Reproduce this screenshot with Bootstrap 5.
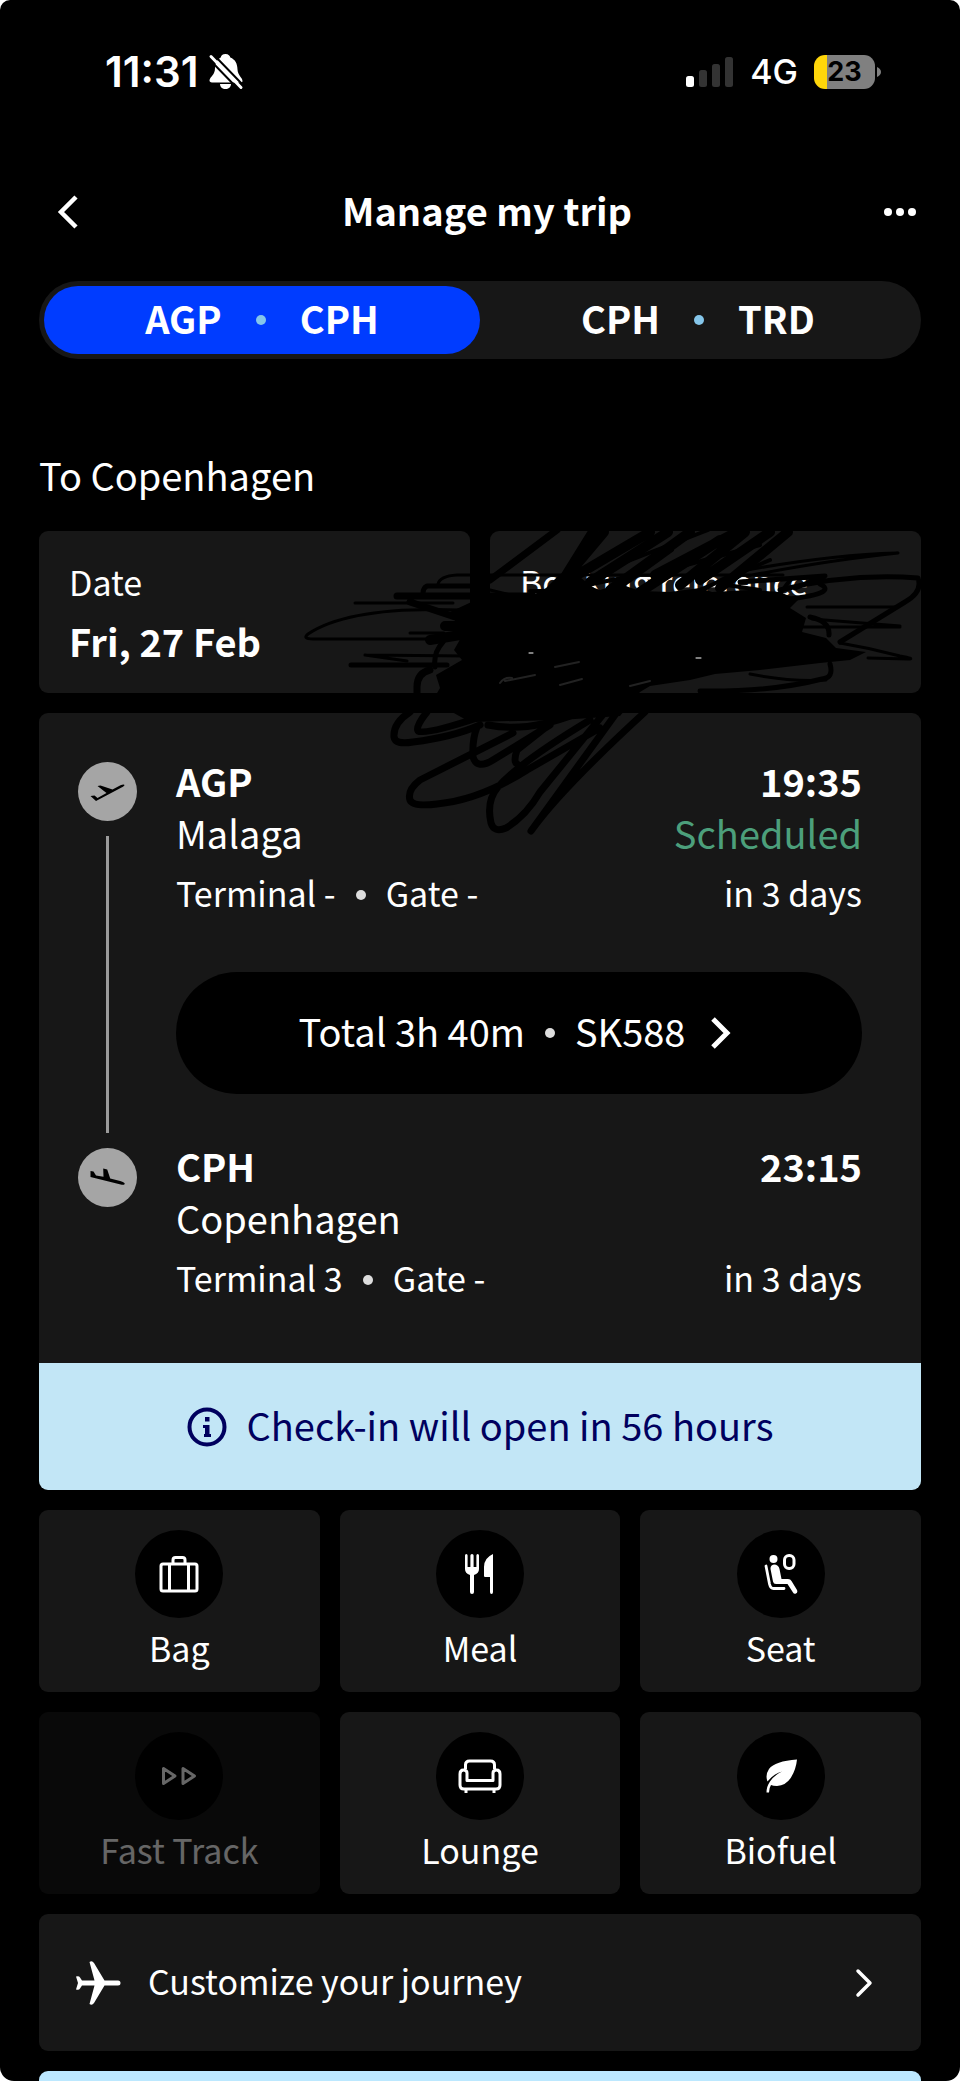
<!DOCTYPE html>
<html lang="en">
<head>
<meta charset="utf-8">
<meta name="viewport" content="width=device-width, initial-scale=1">
<title>Manage my trip</title>
<link href="https://cdn.jsdelivr.net/npm/bootstrap@5.3.0/dist/css/bootstrap.min.css" rel="stylesheet">
<style>
  :root { --panel: #171717; --ice: #c2e6f6; --navy: #00005e; }
  body { background: #fff; color: #fff; font-family: "Noto Sans CJK JP", "Noto Sans", sans-serif; font-size: 34px; line-height: 44px; }
  svg { display: block; flex: none; }
  .screen { background: #000; min-height: 100vh; border-radius: 10px 10px 14px 14px; padding: 0 39px; overflow: hidden; }
  .fs-l { font-size: 38px; line-height: 52px; }
  .lift { padding-bottom: 4px; }
  .status-row { font-family: Inter, sans-serif; height: 142px; padding: 2px 39px 0 66px; line-height: 40px; }
  .clock { font-size: 42px; font-weight: 600; }
  .ringer { gap: 10px; }
  .net { font-size: 34px; font-weight: 500; }
  .battery { width: 61px; height: 34px; border-radius: 11px; background: linear-gradient(90deg, #ffd60a 13px, #808080 13px); color: #000; font-size: 27px; line-height: 34px; font-weight: 700; }
  .title-row { height: 139px; padding: 0 4px 0 18px; }
  .title-row .btn { --bs-btn-padding-x: 0; --bs-btn-padding-y: 0; --bs-btn-color: #fff; --bs-btn-border-width: 0; width: 34px; height: 44px; display: flex; align-items: center; }
  .legs { background: var(--panel); border-radius: 40px; padding: 5px; --bs-nav-pills-border-radius: 34px; --bs-nav-pills-link-active-bg: #003cff; }
  .legs .nav-link { color: #fff; font-weight: 700; padding: 6px 0; border: 0; gap: 34px; }
  .dot { width: 10px; height: 10px; border-radius: 50%; background: #ddd; flex: none; }
  .legs .dot { background: #85c6ea; }
  .section-title { margin: 90px 0 30px; }
  .stack { gap: 20px; }
  .tile-row { --bs-gutter-x: 20px; --bs-gutter-y: 20px; }
  .panel { background: var(--panel); border-radius: 9px; }
  .fact { padding: 29px 30px 26px; }
  .fact dt { font-weight: 400; margin-bottom: 11px; }
  .fact dd { font-weight: 700; margin: 0; min-height: 52px; }
  .flight { padding: 42px 59px 63px 39px; gap: 39px; }
  .rail { width: 59px; padding: 7px 0 93px; gap: 15px; }
  .rail-line { width: 3px; background: #9b9b9b; }
  .scheduled { color: #4c9f7b; }
  .sub { margin-top: 12px; }
  .points { gap: 20px; }
  .points .dot { margin-top: 4px; }
  .total { background: #000; color: #fff; border: 0; border-radius: 61px; height: 122px; margin: 57px 0 46px; gap: 20px; }
  .checkin { background: var(--ice); color: var(--navy); height: 127px; gap: 20px; border-radius: 0 0 9px 9px; }
  .service { --bs-btn-color: #fff; --bs-btn-border-width: 0; --bs-btn-disabled-color: #fff; --bs-btn-disabled-bg: var(--panel); --bs-btn-disabled-opacity: .4; --bs-btn-hover-color: #fff; --bs-btn-hover-bg: var(--panel); font: inherit; padding: 20px 0 22px; gap: 8px; }
  .disc { width: 88px; height: 88px; border-radius: 50%; background: #000; }
  .journey { height: 137px; padding: 0 47px 0 36px; gap: 27px; color: #fff; }
  .offer { background: #bce8ff; border-radius: 9px 9px 0 0; min-height: 10px; }
  .scribble { top: 0; left: 0; width: 100%; pointer-events: none; }
</style>
</head>
<body>
<div class="screen d-flex flex-column">
  <div class="status-row d-flex align-items-center justify-content-between">
    <div class="ringer d-flex align-items-center">
      <span class="clock">11:31</span>
      <svg width="36" height="38" viewBox="0 0 36 38" aria-label="Silent mode"><path d="M17.500 1c3 0 4.500 2 4.800 3.500 5 2 7 6 7.200 12 .2 6 5 8 5 11.500 0 1-1 1.500-2 1.500H4c-1.500 0-3-.7-2.400-2.700C2.400 23.500 7 22 7 15c0-5 2-8.500 5.700-10.500C13 2.800 14.500 1 17.500 1zM12 31h11c0 3-2.500 5-5.500 5S12 34 12 31z" fill="#fff"/><path d="M1 6l30 31M5 1l30 31" stroke="#000" stroke-width="2"/><path d="M3 3.500l30 31" stroke="#fff" stroke-width="3" stroke-linecap="round"/></svg>
    </div>
    <div class="d-flex align-items-center">
      <svg class="me-3" width="48" height="32" viewBox="0 0 48 32" aria-label="Signal"><rect y="20" width="8" height="11" rx="2.500" fill="#fff"/><g fill="#333"><rect x="13" y="14" width="8" height="17" rx="2.500"/><rect x="26" y="8" width="8" height="23" rx="2.500"/><rect x="39" y="1" width="8" height="30" rx="2.500"/></g></svg>
      <span class="net me-3">4G</span>
      <span class="battery text-center">23</span>
      <svg width="7" height="12" viewBox="0 0 7 12"><path d="M2 1q4 2 4 5t-4 5z" fill="#808080"/></svg>
    </div>
  </div>

  <header class="title-row d-flex align-items-center justify-content-between">
    <button class="btn" type="button" aria-label="Back"><svg width="22" height="36" viewBox="0 0 22 36" fill="none" stroke="#fff" stroke-width="4.500"><path d="M19 3L4 18l15 15"/></svg></button>
    <h1 class="fs-l fw-bold m-0 lift">Manage my trip</h1>
    <button class="btn" type="button" aria-label="More"><svg width="34" height="10" viewBox="0 0 34 10" fill="#fff"><circle cx="5" cy="5" r="4"/><circle cx="17" cy="5" r="4"/><circle cx="29" cy="5" r="4"/></svg></button>
  </header>

  <nav class="legs nav nav-pills nav-justified flex-nowrap fs-l">
    <button class="nav-link active d-flex align-items-center justify-content-center" type="button"><span class="lift">AGP</span><span class="dot"></span><span class="lift">CPH</span></button>
    <button class="nav-link d-flex align-items-center justify-content-center" type="button"><span class="lift">CPH</span><span class="dot"></span><span class="lift">TRD</span></button>
  </nav>

  <h2 class="section-title fs-l fw-normal">To Copenhagen</h2>

  <main class="stack d-flex flex-column flex-grow-1">
    <div class="stack d-flex flex-column position-relative">
      <div class="row tile-row">
        <div class="col-6"><dl class="panel fact m-0"><dt>Date</dt><dd class="fs-l">Fri, 27 Feb</dd></dl></div>
        <div class="col-6"><dl class="panel fact m-0"><dt>Booking reference</dt><dd class="fs-l"></dd></dl></div>
      </div>

      <section class="panel">
        <div class="flight d-flex">
          <div class="rail d-flex flex-column align-items-center">
            <svg width="59" height="59" viewBox="0 0 59 59"><circle cx="29.500" cy="29.500" r="29.500" fill="#a5a5a5"/><path d="M12.500 34l4-.5 3 2.500 9-5-9-7 3-.5 12 4 8-4.200c2-.9 4-.9 4-.2s-1 1.500-2.500 2.200L18 39z" fill="#000"/></svg>
            <div class="rail-line flex-grow-1"></div>
            <svg width="59" height="59" viewBox="0 0 59 59"><circle cx="29.500" cy="29.500" r="29.500" fill="#a5a5a5"/><path d="M12.500 23l3 .5 2.500 4 7.500 1.300-.3-8.300 4 1 3 9 10 2.500c3 .8 5 2 4.500 3s-2 1-4 .6L12.500 29z" fill="#000"/></svg>
          </div>
          <div class="flex-grow-1">
            <div class="fs-l d-flex justify-content-between"><strong>AGP</strong><strong>19:35</strong></div>
            <div class="fs-l d-flex justify-content-between"><span>Malaga</span><span class="scheduled">Scheduled</span></div>
            <div class="sub d-flex justify-content-between"><span class="points d-flex align-items-center">Terminal - <span class="dot"></span>Gate -</span><span>in 3 days</span></div>
            <button type="button" class="total fs-l w-100 d-flex align-items-center justify-content-center"><span class="lift">Total 3h 40m</span><span class="dot"></span><span class="lift">SK588</span><svg width="34" height="36" viewBox="0 0 34 36" fill="none" stroke="#fff" stroke-width="5"><path d="M8 4l14 14L8 32"/></svg></button>
            <div class="fs-l d-flex justify-content-between"><strong>CPH</strong><strong>23:15</strong></div>
            <div class="fs-l">Copenhagen</div>
            <div class="sub d-flex justify-content-between"><span class="points d-flex align-items-center">Terminal 3 <span class="dot"></span>Gate -</span><span>in 3 days</span></div>
          </div>
        </div>
        <div class="checkin fs-l d-flex align-items-center justify-content-center">
          <svg width="40" height="40" viewBox="0 0 40 40"><circle cx="20" cy="20" r="17.500" fill="none" stroke="currentColor" stroke-width="4"/><path d="M18 10h4.500v4.500H18zM16 18h6.500v9H24v3h-7v-3h1v-6h-2z" fill="currentColor"/></svg>
          <span class="lift">Check-in will open in 56 hours</span>
        </div>
      </section>

      <svg class="scribble position-absolute" viewBox="39 531 882 320" overflow="visible" aria-hidden="true" fill="none" stroke="#000" stroke-linecap="round" stroke-linejoin="round">
        <path fill="#000" stroke="none" d="M450 612L480 598 530 597 546 588 560 574 576 570 584 584 600 590 620 584 640 591 670 592 700 588 712 592 750 590 780 592 798 600 790 608 806 618 802 632 826 638 836 648 866 652 850 660 820 663 760 670 715 674 690 680 650 686 640 692 620 716 590 718 560 720 470 722 452 712 433 700 440 688 436 675 462 660 454 650 462 636 456 622z"/>
        <path stroke-width="3" d="M513 575H457q-17 1-19 9M355 603h98M460 610Q350 606 308 634q-6 5 5 5h134M410 633h34M365 655l102 1M365 655l42 6M513 575h270M897 553Q830 555 747 570M898 553Q830 560 747 576M807 607h90M812 619l88 7M800 627h100M840 643q30 5 60 13 16 3 8 3l-40-1M750 674q40 8 76 6M490 590l50 12M484 600l60-6"/>
        <path stroke-width="5" d="M480 586h-53q-4 2-4 7M351 665h96M780 590Q850 573 918 578q5 14-13 24l-65 40M810 617q20 4 19 18M830 664q4 14-8 15-50 13-122 12M443 642q-10 11-8 25M740 582l85-6-30 12M780 600q60-6 40-16"/>
        <path stroke-width="7" d="M397 596h136M410 602l60 20M430 670q-13 3-13 17v13M427 712Q415 727 418 731q8 4 62-14M410 712Q393 723 394 737q1 8 19 5 40-5 67-17M513 733L420 780q-13 10-10 20 3 7 27 4 43-4 90-34L600 728M477 727q-5 13-4 30 4 13 20 3L550 725M488 725q40 8 90-12M550 724l-33 26q-4 12 0 14M590 720Q520 762 498 787q-12 14-7 36 3 10 15 5 20-12 34-36L605 712M615 715L531 831Q560 790 645 712M557 530L490 580"/>
        <path stroke-width="10" d="M593 532L557 590M604 532L562 582M650 532L572 578M668 532L590 582M690 532L610 590M720 540L640 592M745 532L680 585M770 532L700 580M788 532L720 588M735 533L655 575M430 640l30-5M445 626h20"/>
        <path stroke-width="4" d="M708 530L600 572M760 545L668 570M770 560L690 594M672 550L614 592M620 580l-20 20M572 588l60-12M640 594l30-20M760 590l-40-6M725 578l-30 16M790 580l-10 14M573 574l25 20M530 591h30"/>
        <path stroke="#fff" stroke-width="1" d="M529 653h4M696 658h5"/>
        <path stroke="#222" stroke-width="2" d="M555 667l24-5M560 685l22-6M500 683q4-6 12-5M505 681l30-6M630 686l20-5"/>
      </svg>
    </div>

    <div class="row tile-row">
      <div class="col-4"><button type="button" class="btn service panel w-100 d-flex flex-column align-items-center">
        <span class="disc d-flex align-items-center justify-content-center"><svg width="40" height="40" viewBox="0 0 40 40" fill="none" stroke="#fff" stroke-width="3"><rect x="2" y="10" width="36" height="27" rx="2"/><path d="M10.500 10v27M29.500 10v27M14 10V6q0-2.500 2.500-2.500h7Q26 3.500 26 6v4"/></svg></span><span>Bag</span></button></div>
      <div class="col-4"><button type="button" class="btn service panel w-100 d-flex flex-column align-items-center">
        <span class="disc d-flex align-items-center justify-content-center"><svg width="40" height="40" viewBox="0 0 40 40" fill="#fff"><path d="M5 1.500q0-1.500 1.300-1.500t1.300 1.500V13h2.800V1.500Q10.400 0 12 0t1.600 1.500V13h2.800V1.500q0-1.500 1.300-1.500T19 1.500V15q0 4.500-5 6v17q0 2-2 2t-2-2V21q-5-1.500-5-6zM33 0v38q0 2-1.500 2T30 38V23h-5q-1 0-1-1.500V13q0-9 9-13z"/></svg></span><span>Meal</span></button></div>
      <div class="col-4"><button type="button" class="btn service panel w-100 d-flex flex-column align-items-center">
        <span class="disc d-flex align-items-center justify-content-center"><svg width="40" height="40" viewBox="0 0 40 40"><circle cx="12.500" cy="5" r="4" fill="#fff"/><rect x="23.500" y="1.500" width="9.500" height="13" rx="4.500" fill="none" stroke="#fff" stroke-width="3"/><path d="M9.500 15q-.2-4 3.500-4.500 4.500 0 5.500 4.500l2 10H27q2.500 0 3.500 2L36 36q1 2.500-1 3.500-2 .8-3-1L26.500 30H15q-2.500 0-3-2.500z" fill="#fff"/><path d="M5 12l3.500 18q1 4.500 4 4.500H23" fill="none" stroke="#fff" stroke-width="2.800" stroke-linecap="round"/></svg></span><span>Seat</span></button></div>
      <div class="col-4"><button type="button" disabled class="btn service panel w-100 d-flex flex-column align-items-center">
        <span class="disc d-flex align-items-center justify-content-center"><svg width="40" height="40" viewBox="0 0 40 40" fill="none" stroke="#fff" stroke-width="3" stroke-linejoin="round"><path d="M4.500 12.500v15L16 20zM24 12.500v15L35.500 20z"/></svg></span><span>Fast Track</span></button></div>
      <div class="col-4"><button type="button" class="btn service panel w-100 d-flex flex-column align-items-center">
        <span class="disc d-flex align-items-center justify-content-center"><svg width="44" height="40" viewBox="0 0 44 40" fill="none" stroke="#fff" stroke-width="3" stroke-linejoin="round"><path d="M7.500 13V9q0-4 4-4h21q4 0 4 4v4M9 24.500h26V17q0-3 3.500-3t3.500 4v11q0 4-4 4H6q-4 0-4-4V18q0-4 3.500-4T9 17zM8 33v4M36 33v4"/></svg></span><span>Lounge</span></button></div>
      <div class="col-4"><button type="button" class="btn service panel w-100 d-flex flex-column align-items-center">
        <span class="disc d-flex align-items-center justify-content-center"><svg width="40" height="40" viewBox="0 0 40 40"><path d="M36 3.500q-1 10-6 18T16 30q-4 0-6-1-2 3-2 7.500H5.500q0-6 3.500-11 4-6 12-10-8 2-14.500 10Q4 19 8 13q6-8 28-9.500z" fill="#fff"/></svg></span><span>Biofuel</span></button></div>
    </div>

    <a href="#" class="journey panel d-flex align-items-center text-decoration-none">
      <svg width="46" height="46" viewBox="0 0 46 46" fill="#fff"><path d="M1 16.500q3-1 4 1l2 3h12.500L14.500 2q2.500-2 4.500 1l10.500 17.500H43q2.500 0 2.500 2.500T43 25.500H29.500L19 43q-2 3-4.500 1l5-18.500H7l-2 3q-1 2-4 1l2-6.500z"/></svg>
      <span class="flex-grow-1 lift">Customize your journey</span>
      <svg width="20" height="32" viewBox="0 0 20 32" fill="none" stroke="#fff" stroke-width="3.500" stroke-linecap="round" stroke-linejoin="round"><path d="M4 4l12 12L4 28"/></svg>
    </a>
    <div class="offer flex-grow-1"></div>
  </main>
</div>
<script src="https://cdn.jsdelivr.net/npm/bootstrap@5.3.0/dist/js/bootstrap.bundle.min.js"></script>
</body>
</html>
